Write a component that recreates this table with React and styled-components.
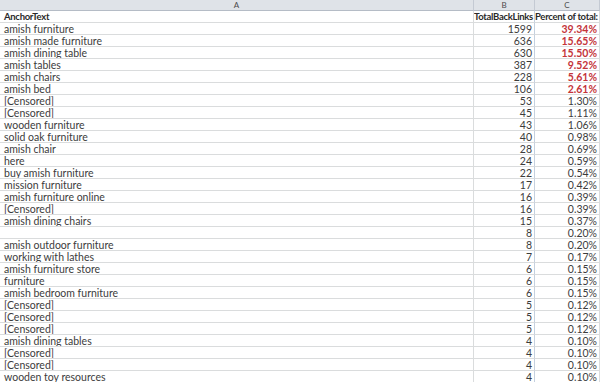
import { Fragment } from 'react';
import styled, { createGlobalStyle } from 'styled-components';

const Global = createGlobalStyle`
    html, body {
        margin: 0;
        padding: 0;
        background: #ffffff;
        overflow: hidden;
    }
`

const Sheet = styled.div`
    display: grid;
    grid-template-columns: 474px 61px 65px;
    width: 600px;
    font-family: Lato, "Open Sans", sans-serif;
    font-size: 10.5px;
    color: #3c3c3c;
`

const ColHead = styled.div`
    height: 11px;
    line-height: 11px;
    text-align: center;
    font-size: 8px;
    color: #4a4a4a;
    background: #dfe3e8;
    border-bottom: 1px solid #b5bcc6;
    border-right: 1px solid #c4cad3;
    box-sizing: border-box;
`

const Cell = styled.div`
    height: 12px;
    line-height: 12px;
    box-sizing: border-box;
    padding: 0 2px 0 ${p => (p.$right ? 0 : 4)}px;
    text-align: ${p => (p.$right ? 'right' : 'left')};
    border-bottom: 1px solid #dadcdd;
    border-right: 1px solid ${p => (p.$edge ? '#c5d1df' : '#dadcdd')};
    white-space: nowrap;
    overflow: hidden;
    font-weight: ${p => (p.$bold ? 700 : 400)};
    color: ${p => (p.$red ? '#c4343a' : '#3c3c3c')};
`

// bold titles of the first row, squeezed like Calibri
const Title = styled(Cell)`
    font-size: 9.5px;
    letter-spacing: -0.3px;
    color: #2a2a2a;
`

const rows = [
    ['amish furniture', 1599, '39.34%', true],
    ['amish made furniture', 636, '15.65%', true],
    ['amish dining table', 630, '15.50%', true],
    ['amish tables', 387, '9.52%', true],
    ['amish chairs', 228, '5.61%', true],
    ['amish bed', 106, '2.61%', true],
    ['[Censored]', 53, '1.30%'],
    ['[Censored]', 45, '1.11%'],
    ['wooden furniture', 43, '1.06%'],
    ['solid oak furniture', 40, '0.98%'],
    ['amish chair', 28, '0.69%'],
    ['here', 24, '0.59%'],
    ['buy amish furniture', 22, '0.54%'],
    ['mission furniture', 17, '0.42%'],
    ['amish furniture online', 16, '0.39%'],
    ['[Censored]', 16, '0.39%'],
    ['amish dining chairs', 15, '0.37%'],
    ['', 8, '0.20%'],
    ['amish outdoor furniture', 8, '0.20%'],
    ['working with lathes', 7, '0.17%'],
    ['amish furniture store', 6, '0.15%'],
    ['furniture', 6, '0.15%'],
    ['amish bedroom furniture', 6, '0.15%'],
    ['[Censored]', 5, '0.12%'],
    ['[Censored]', 5, '0.12%'],
    ['[Censored]', 5, '0.12%'],
    ['amish dining tables', 4, '0.10%'],
    ['[Censored]', 4, '0.10%'],
    ['[Censored]', 4, '0.10%'],
    ['wooden toy resources', 4, '0.10%'],
]

const App = () => {
    return (
        <>
            <Global />
            <Sheet>
                <ColHead>A</ColHead>
                <ColHead>B</ColHead>
                <ColHead>C</ColHead>

                <Title $bold>AnchorText</Title>
                <Title $bold $right $edge>TotalBackLinks</Title>
                <Title $bold $right>Percent of total:</Title>

                {rows.map(([text, count, pct, hot], i) => (
                    <Fragment key={i}>
                        <Cell>{text}</Cell>
                        <Cell $right $edge>{count}</Cell>
                        <Cell $right $bold={hot} $red={hot}>{pct}</Cell>
                    </Fragment>
                ))}
            </Sheet>
        </>
    )
}

export default App;
